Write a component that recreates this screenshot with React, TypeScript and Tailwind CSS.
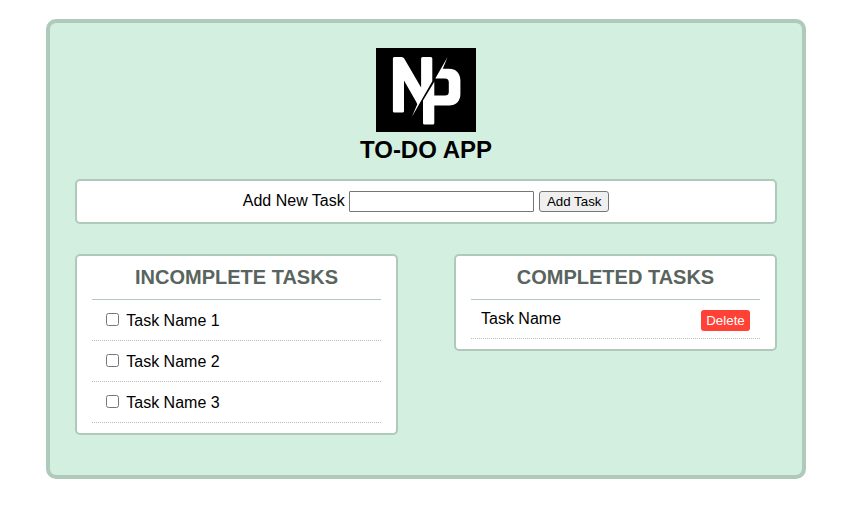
const incompleteTasks = ["Task Name 1", "Task Name 2", "Task Name 3"];
const completedTasks = ["Task Name"];

function Logo() {
  return (
    <svg className="block h-[84px] w-[100px]" viewBox="0 0 100 84" role="img" aria-label="Logo">
      <rect width="100" height="84" fill="#000" />
      <path
        fill="#fff"
        d="M18.3 9H25.6Q27.4 9 28.2 10.6L45.1 39.5V10.5Q45.1 9 46.6 9H54.8Q56.3 9 56.3 10.5V33.2L35.8 69L41.3 56.2L40 53.5L28 32.5V63.2Q28 64.5 26.5 64.5H18.3Q16.9 64.5 16.9 63.2V10.5Q16.9 9 18.3 9Z"
      />
      <path
        fill="#fff"
        d="M71.6 9L66.8 20.7H73C80 20.7 84.4 25.4 84.4 32.4V46C84.4 53 80 57.5 73 57.5H58.3V75.2Q58.3 76.6 56.9 76.6H48.5Q47 76.6 47 75.2V52.4L58.3 33.8V47.6H69C71.6 47.6 72.8 46.4 72.8 43.8V34.3C72.8 31.7 71.6 30.4 69 30.4H59.3Z"
      />
    </svg>
  );
}

function PanelTitle({ children }: { children: string }) {
  return (
    <h2 className="h-[34px] border-b border-[#afc9bb] text-center text-xl leading-[23px] font-bold text-[#58645d]">
      {children}
    </h2>
  );
}

export default function App() {
  return (
    <div className="mx-[46px] mt-[19px] flex h-[460px] w-[760px] flex-col rounded-[10px] border-4 border-[#afc9bb] bg-[#d3efe0] p-[25px] font-['Liberation_Sans',Arial,sans-serif] text-base text-black">
      <header className="flex flex-col items-center">
        <Logo />
        <h1 className="mt-1 text-2xl leading-[27px] font-bold">TO-DO APP</h1>
      </header>

      <form
        className="mt-4 flex h-[45px] shrink-0 items-start justify-center rounded-[5px] border-2 border-[#afc9bb] bg-white pt-[10px]"
        onSubmit={(event) => event.preventDefault()}
      >
        <label htmlFor="new-task" className="mr-[4.45px] leading-5">
          Add New Task
        </label>
        <input
          id="new-task"
          type="text"
          className="mr-[5px] h-[21px] w-[185px] rounded-[1px] border border-[#767676] bg-white px-0.5 text-[13.333px]"
        />
        <button
          type="submit"
          className="h-[21px] w-[70px] rounded-[3px] border border-[#767676] bg-[#efefef] text-[13.333px] leading-[19px]"
        >
          Add Task
        </button>
      </form>

      <main className="mt-[30px] flex items-start justify-between">
        <section className="h-[181px] w-[323px] rounded-[5px] border-2 border-[#afc9bb] bg-white px-[15px] pt-[10px]">
          <PanelTitle>INCOMPLETE TASKS</PanelTitle>
          <ul>
            {incompleteTasks.map((task) => (
              <li key={task} className="h-[41px] border-b border-dotted border-[#bbb] pt-[11px] pl-[14px]">
                <label className="flex items-start">
                  <input type="checkbox" className="mt-[2px] mr-[7.25px] size-[13px]" />
                  <span className="leading-5">{task}</span>
                </label>
              </li>
            ))}
          </ul>
        </section>

        <section className="h-[97px] w-[323px] rounded-[5px] border-2 border-[#afc9bb] bg-white px-[15px] pt-[10px]">
          <PanelTitle>COMPLETED TASKS</PanelTitle>
          <ul>
            {completedTasks.map((task) => (
              <li
                key={task}
                className="flex h-[39px] items-start justify-between border-b border-dotted border-[#bbb] px-[10px] pt-[10px]"
              >
                <span className="leading-[18px]">{task}</span>
                <button className="h-[21px] w-[49px] rounded-[3px] bg-[#ff4136] text-[13.333px] leading-[21px] text-white">
                  Delete
                </button>
              </li>
            ))}
          </ul>
        </section>
      </main>
    </div>
  );
}
